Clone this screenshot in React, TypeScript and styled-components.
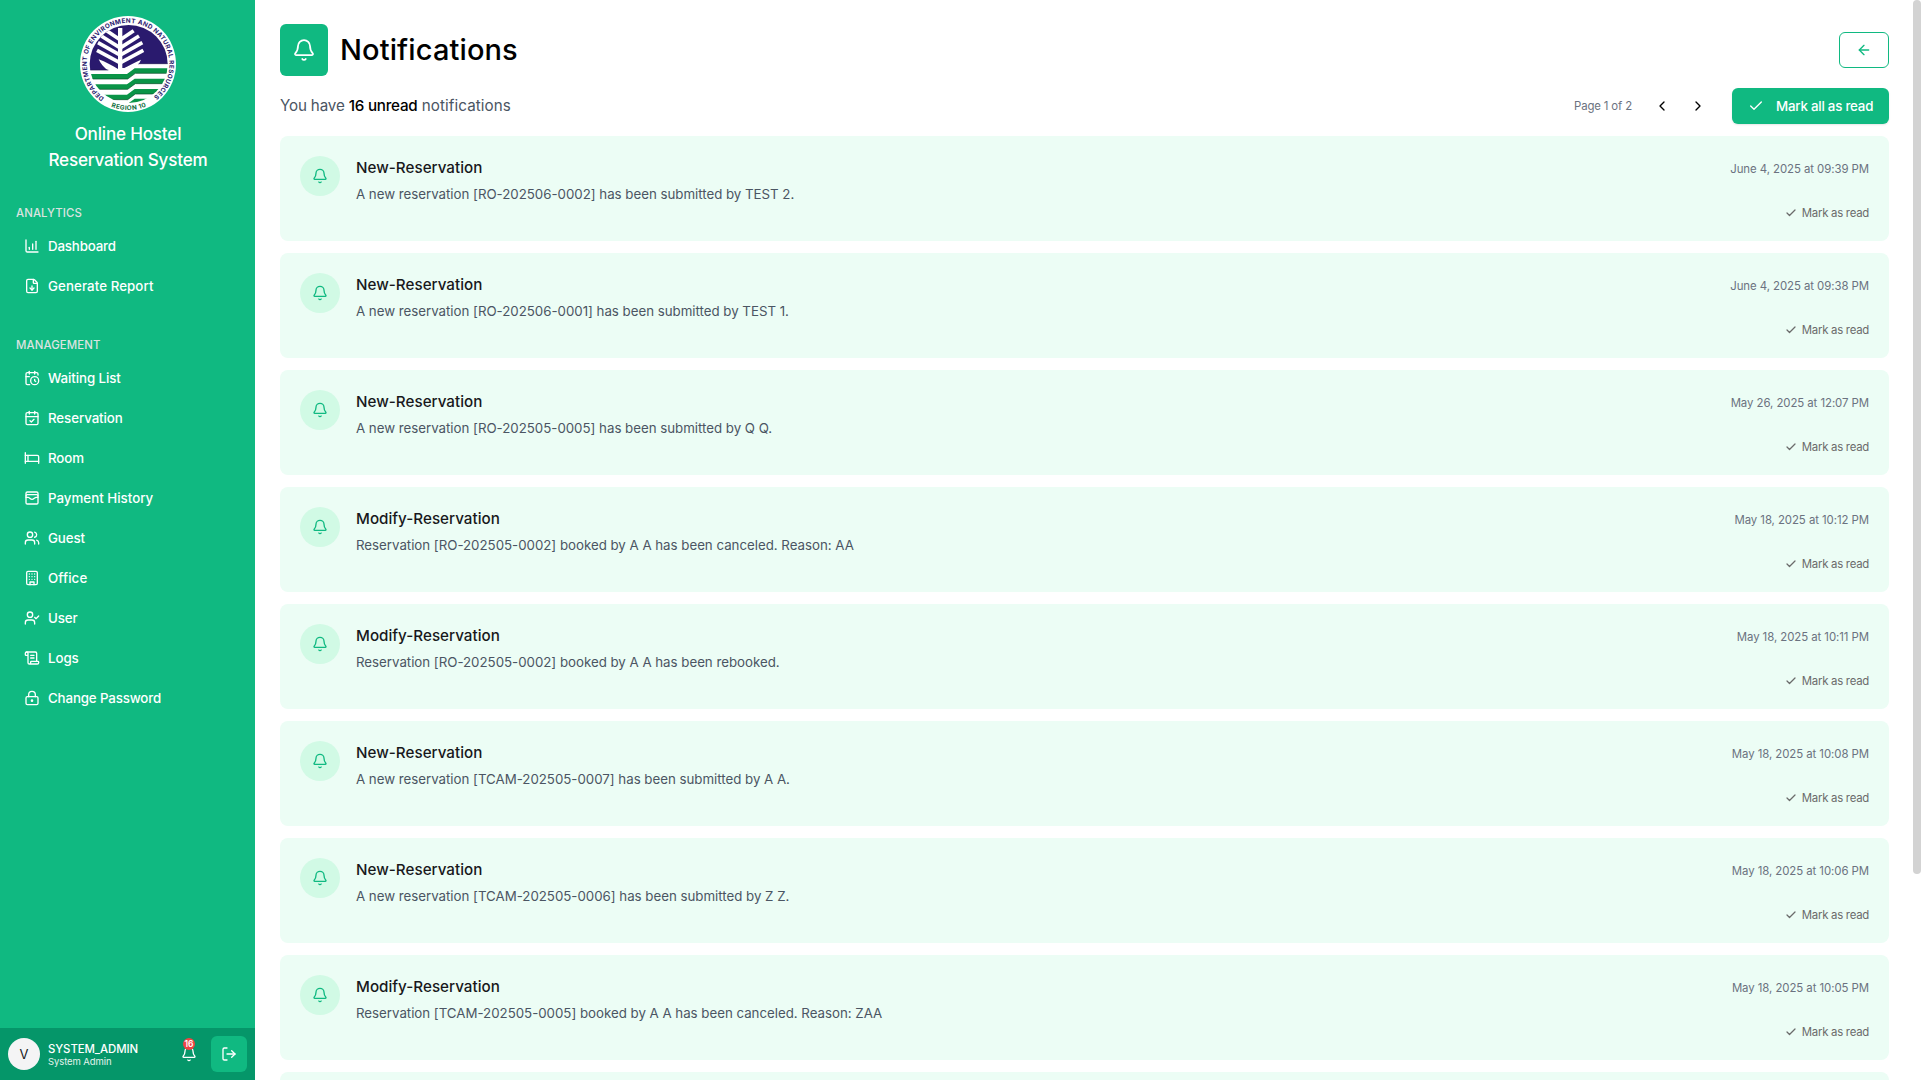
import React from "react";
import styled, { createGlobalStyle } from "styled-components";
import {
  ArrowLeft,
  Bed,
  Bell,
  CalendarCheck,
  CalendarClock,
  ChartColumnIncreasing,
  Check,
  ChevronLeft,
  ChevronRight,
  FileDown,
  LockKeyhole,
  LogOut,
  ScrollText,
  UserCheck,
  Users,
  WalletCards,
} from "lucide-react";

const GlobalStyle = createGlobalStyle`
  * { box-sizing: border-box; }
  body {
    margin: 0;
    overflow: hidden;
    background: #fff;
    color: #000;
    font-family: Inter, "Liberation Sans", sans-serif;
  }
  button { font: inherit; border: 0; padding: 0; background: none; cursor: pointer; }
  h1, h2, h3, p, ul { margin: 0; padding: 0; }
  ul { list-style: none; }
  svg { display: block; flex: none; }
`;

const Page = styled.div`
  display: flex;
  width: 100%;
  height: 100vh;
  overflow: hidden;
`;

/* ---------- Sidebar ---------- */

const Sidebar = styled.aside`
  display: flex;
  flex-direction: column;
  flex: none;
  width: 255px;
  background: #10b981;
  color: #fff;
`;

const Brand = styled.div`
  display: flex;
  flex-direction: column;
  align-items: center;
  padding: 16px 0 0 1px;
`;

const BrandName = styled.h2`
  margin-top: 9px;
  font-size: 17.1px;
  line-height: 26px;
  font-weight: 550;
  letter-spacing: -0.2px;
  text-align: center;
`;

const Nav = styled.nav`
  flex: 1;
  display: flex;
  flex-direction: column;
  gap: 35px;
  padding: 32px 16px 0;
`;

const SectionTitle = styled.h3`
  height: 16px;
  font-size: 11.4px;
  line-height: 16px;
  font-weight: 500;
  letter-spacing: 0.1px;
  color: #dbe3e0;
`;

const NavList = styled.ul`
  display: flex;
  flex-direction: column;
  gap: 8px;
  padding: 9px 8px 0;
`;

const NavItem = styled.li<{ $track: number }>`
  display: flex;
  align-items: center;
  gap: 8px;
  height: 32px;
  font-size: 13.3px;
  font-weight: 550;
  letter-spacing: ${(p) => p.$track}px;
`;

const Account = styled.div`
  display: flex;
  align-items: center;
  height: 52px;
  padding: 0 8px;
  background: #059669;
`;

const Avatar = styled.div`
  display: grid;
  place-items: center;
  width: 32px;
  height: 32px;
  border-radius: 50%;
  background: #f4f4f5;
  color: #18181b;
  font-size: 13px;
`;

const AccountText = styled.div`
  flex: 1;
  padding: 2px 0 0 8px;
`;

const AccountName = styled.p`
  font-size: 11.4px;
  line-height: 14px;
  font-weight: 500;
  letter-spacing: -0.09px;
`;

const AccountRole = styled.p`
  font-size: 9.5px;
  line-height: 12px;
  letter-spacing: -0.1px;
  color: #e3f3ed;
`;

const Alerts = styled.div`
  position: relative;
  margin-right: 14px;
`;

const AlertCount = styled.span`
  position: absolute;
  top: -8px;
  left: 2px;
  width: 12px;
  height: 12px;
  border-radius: 50%;
  background: #ef4444;
  font-size: 8.5px;
  line-height: 12px;
  font-weight: 600;
  text-align: center;
`;

const LogoutButton = styled.button`
  display: grid;
  place-items: center;
  width: 36px;
  height: 36px;
  border-radius: 6px;
  background: #10b981;
  color: #fff;
`;

/* ---------- Main ---------- */

const Main = styled.main`
  flex: 1;
  display: flex;
  flex-direction: column;
  padding: 24px 24px 0 25px;
  overflow: hidden;
`;

const Header = styled.header`
  display: flex;
  align-items: center;
  flex: none;
  height: 52px;
`;

const HeaderIcon = styled.div`
  display: grid;
  place-items: center;
  width: 48px;
  height: 52px;
  border-radius: 6px;
  background: #10b981;
  color: #fff;
`;

const Title = styled.h1`
  flex: 1;
  margin-left: 12px;
  font-size: 29px;
  line-height: 36px;
  font-weight: 550;
  letter-spacing: 0.12px;
`;

const BackButton = styled.button`
  display: grid;
  place-items: center;
  width: 50px;
  height: 36px;
  border: 1px solid #10b981;
  border-radius: 6px;
  color: #10b981;
`;

const Toolbar = styled.div`
  display: flex;
  align-items: center;
  flex: none;
  height: 36px;
  margin: 12px 0;
`;

const Summary = styled.p`
  flex: 1;
  padding-bottom: 1px;
  font-size: 15.2px;
  color: #4b5563;
  white-space: pre;
`;

const Lead = styled.span`
  letter-spacing: -0.16px;
`;

const Tail = styled.span`
  letter-spacing: 0.08px;
`;

const UnreadCount = styled.strong`
  color: #000;
  font-weight: 550;
  letter-spacing: -0.24px;
`;

const PageLabel = styled.span`
  margin-right: 12px;
  font-size: 11.4px;
  letter-spacing: -0.14px;
  color: #6b7280;
`;

const PagerButton = styled.button`
  display: grid;
  place-items: center;
  width: 36px;
  height: 36px;
  color: #000;
`;

const MarkAllButton = styled.button`
  display: flex;
  align-items: center;
  gap: 12px;
  width: 157px;
  height: 36px;
  margin-left: 16px;
  padding-left: 16px;
  border-radius: 6px;
  background: #10b981;
  box-shadow: 0 1px 2px rgba(0, 0, 0, 0.1);
  color: #fff;
  font-size: 13.3px;
  font-weight: 550;
  letter-spacing: -0.22px;
  white-space: nowrap;
`;

const List = styled.div`
  display: flex;
  flex-direction: column;
  gap: 12px;
`;

const Card = styled.article`
  display: flex;
  flex: none;
  height: 105px;
  padding: 20px;
  border-radius: 8px;
  background: #ecfdf5;
`;

const CardIcon = styled.div`
  display: grid;
  place-items: center;
  flex: none;
  width: 40px;
  height: 40px;
  border-radius: 50%;
  background: #d1fae5;
  color: #10b981;
`;

const CardBody = styled.div`
  flex: 1;
  padding-left: 16px;
`;

const CardTitle = styled.h3`
  font-size: 15.2px;
  line-height: 24px;
  font-weight: 450;
  letter-spacing: 0.02px;
  color: #18181b;
`;

const CardMessage = styled.p`
  margin-top: 4px;
  font-size: 13.3px;
  line-height: 20px;
  letter-spacing: -0.02px;
  color: #4b5563;
`;

const CardAside = styled.div`
  display: flex;
  flex-direction: column;
  align-items: flex-end;
  color: #6b7280;
  font-size: 11.4px;
`;

const Time = styled.time`
  margin-top: 5px;
  line-height: 16px;
  letter-spacing: -0.06px;
`;

const MarkRead = styled.button`
  display: flex;
  align-items: center;
  gap: 5px;
  margin-top: 28px;
  line-height: 16px;
  letter-spacing: -0.27px;
  color: #6b6b6b;
`;

const ScrollThumb = styled.div`
  flex: none;
  width: 8px;
  height: 874px;
  border-radius: 4px;
  background: #d3d3d3;
`;

/* ---------- Drawings ---------- */

function OfficeBuilding({ size = 16 }: { size?: number }) {
  return (
    <svg
      width={size}
      height={size}
      viewBox="0 0 24 24"
      fill="none"
      stroke="currentColor"
      strokeWidth="2"
      strokeLinecap="round"
      strokeLinejoin="round"
    >
      <rect x="4" y="2" width="16" height="20" rx="2" />
      <path d="M9 22v-4h6v4M8 6h.01M16 6h.01M12 6h.01M12 10h.01M12 14h.01M16 10h.01M16 14h.01M8 10h.01M8 14h.01" />
    </svg>
  );
}

const stripeTops = [186, 217, 248, 277];
const leftBranches = [
  [92, 56, 82],
  [76, 72, 106],
  [66, 92, 128],
  [63, 115, 151],
];

function Logo() {
  return (
    <svg width="96" height="96" viewBox="12 12 288 288" role="img">
      <defs>
        <clipPath id="disc">
          <circle cx="158" cy="156" r="117" />
        </clipPath>
        <path id="ringTop" d="M 85 258 A 124 124 0 1 1 229 257" />
        <path id="ringBottom" d="M 98 281 A 138 138 0 0 0 218 280" />
      </defs>
      <circle cx="156" cy="156" r="144" fill="#fff" />
      <g clipPath="url(#disc)">
        <path d="M30 30H290V155H190L160 174H30Z" fill="#2a1a6e" />
        <path d="M126 48H139V168H190V157H290V290H30V176H97C84 167 74 156 68 142C88 150 108 160 126 171Z" fill="#fff" />
        <path d="M139 171C160 160 178 150 195 143C190 156 181 165 170 174H139Z" fill="#fff" />
        <g stroke="#fff" strokeWidth="11" fill="none">
          {leftBranches.map(([x, y, end]) => (
            <React.Fragment key={y}>
              <path d={`M${x} ${y}L130 ${end}`} />
              <path d={`M${265 - x} ${y}L135 ${end}`} />
            </React.Fragment>
          ))}
        </g>
        <path d="M30 174H97M188 155H290" stroke="#1d1450" strokeWidth="2" />
        {stripeTops.map((y) => (
          <g key={y}>
            <path
              d={`M30 ${y}H153L176 ${y - 17}H290V${y - 2}H178L155 ${y + 15}H30Z`}
              fill="#0a9447"
            />
            <path
              d={`M30 ${y + 15}H155L178 ${y - 2}H290`}
              fill="none"
              stroke="#0b4c2a"
              strokeWidth="2"
            />
          </g>
        ))}
      </g>
      <text fontSize="19" fontWeight="700" fill="#2a1a6e">
        <textPath href="#ringTop" textLength="620" lengthAdjust="spacing">
          DEPARTMENT OF ENVIRONMENT AND NATURAL RESOURCES
        </textPath>
      </text>
      <text fontSize="19" fontWeight="700" fill="#0b6b38">
        <textPath href="#ringBottom" startOffset="8" textLength="108" lengthAdjust="spacing">
          REGION 10
        </textPath>
      </text>
    </svg>
  );
}

/* ---------- Data ---------- */

type Entry = { label: string; icon: React.ComponentType<{ size?: number }>; track?: number };

const sections: { title: string; items: Entry[] }[] = [
  {
    title: "ANALYTICS",
    items: [
      { label: "Dashboard", icon: ChartColumnIncreasing, track: -0.16 },
      { label: "Generate Report", icon: FileDown, track: 0.08 },
    ],
  },
  {
    title: "MANAGEMENT",
    items: [
      { label: "Waiting List", icon: CalendarClock },
      { label: "Reservation", icon: CalendarCheck },
      { label: "Room", icon: Bed },
      { label: "Payment History", icon: WalletCards, track: 0.02 },
      { label: "Guest", icon: Users },
      { label: "Office", icon: OfficeBuilding, track: 0.12 },
      { label: "User", icon: UserCheck },
      { label: "Logs", icon: ScrollText },
      { label: "Change Password", icon: LockKeyhole, track: -0.14 },
    ],
  },
];

const notifications = [
  ["New-Reservation", "A new reservation [RO-202506-0002] has been submitted by TEST 2.", "June 4, 2025 at 09:39 PM"],
  ["New-Reservation", "A new reservation [RO-202506-0001] has been submitted by TEST 1.", "June 4, 2025 at 09:38 PM"],
  ["New-Reservation", "A new reservation [RO-202505-0005] has been submitted by Q Q.", "May 26, 2025 at 12:07 PM"],
  ["Modify-Reservation", "Reservation [RO-202505-0002] booked by A A has been canceled. Reason: AA", "May 18, 2025 at 10:12 PM"],
  ["Modify-Reservation", "Reservation [RO-202505-0002] booked by A A has been rebooked.", "May 18, 2025 at 10:11 PM"],
  ["New-Reservation", "A new reservation [TCAM-202505-0007] has been submitted by A A.", "May 18, 2025 at 10:08 PM"],
  ["New-Reservation", "A new reservation [TCAM-202505-0006] has been submitted by Z Z.", "May 18, 2025 at 10:06 PM"],
  ["Modify-Reservation", "Reservation [TCAM-202505-0005] booked by A A has been canceled. Reason: ZAA", "May 18, 2025 at 10:05 PM"],
];

export default function App() {
  return (
    <Page>
      <GlobalStyle />
      <Sidebar>
        <Brand>
          <Logo />
          <BrandName>
            Online Hostel
            <br />
            Reservation System
          </BrandName>
        </Brand>
        <Nav>
          {sections.map((section) => (
            <section key={section.title}>
              <SectionTitle>{section.title}</SectionTitle>
              <NavList>
                {section.items.map(({ label, icon: Icon, track = -0.08 }) => (
                  <NavItem key={label} $track={track}>
                    <Icon size={16} />
                    {label}
                  </NavItem>
                ))}
              </NavList>
            </section>
          ))}
        </Nav>
        <Account>
          <Avatar>V</Avatar>
          <AccountText>
            <AccountName>SYSTEM_ADMIN</AccountName>
            <AccountRole>System Admin</AccountRole>
          </AccountText>
          <Alerts>
            <Bell size={16} />
            <AlertCount>16</AlertCount>
          </Alerts>
          <LogoutButton>
            <LogOut size={16} />
          </LogoutButton>
        </Account>
      </Sidebar>

      <Main>
        <Header>
          <HeaderIcon>
            <Bell size={24} strokeWidth={1.75} />
          </HeaderIcon>
          <Title>Notifications</Title>
          <BackButton>
            <ArrowLeft size={16} />
          </BackButton>
        </Header>
        <Toolbar>
          <Summary>
            <Lead>You have </Lead>
            <UnreadCount>16 unread</UnreadCount>
            <Tail> notifications</Tail>
          </Summary>
          <PageLabel>Page 1 of 2</PageLabel>
          <PagerButton>
            <ChevronLeft size={16} />
          </PagerButton>
          <PagerButton>
            <ChevronRight size={16} />
          </PagerButton>
          <MarkAllButton>
            <Check size={16} />
            Mark all as read
          </MarkAllButton>
        </Toolbar>
        <List>
          {notifications.map(([title, message, time]) => (
            <Card key={message}>
              <CardIcon>
                <Bell size={16} />
              </CardIcon>
              <CardBody>
                <CardTitle>{title}</CardTitle>
                <CardMessage>{message}</CardMessage>
              </CardBody>
              <CardAside>
                <Time>{time}</Time>
                <MarkRead>
                  <Check size={12} strokeWidth={2.5} />
                  Mark as read
                </MarkRead>
              </CardAside>
            </Card>
          ))}
          <Card />
        </List>
      </Main>
      <ScrollThumb />
    </Page>
  );
}
